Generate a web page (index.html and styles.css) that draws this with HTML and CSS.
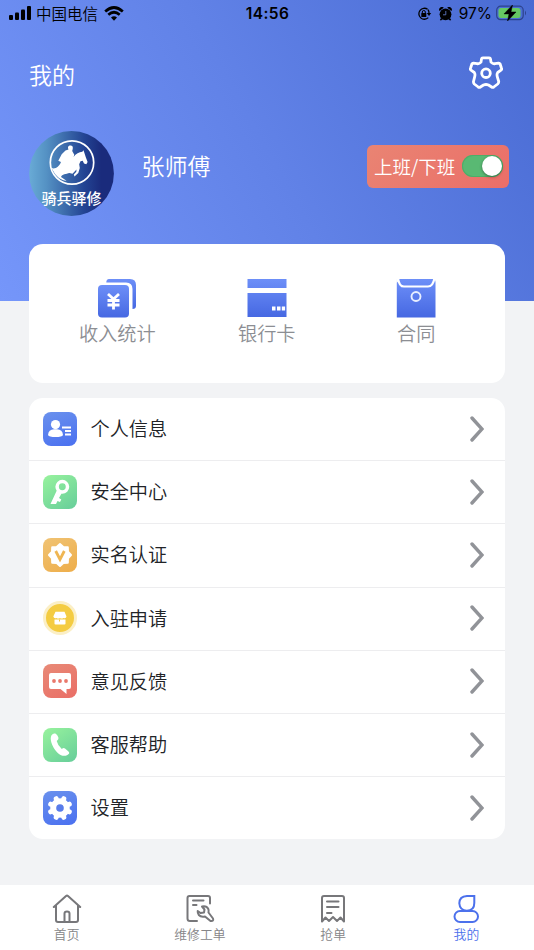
FILE: index.html
```html
<!DOCTYPE html>
<html lang="zh-CN">
<head>
<meta charset="utf-8">
<meta name="viewport" content="width=device-width, initial-scale=1">
<title>我的</title>
<link rel="stylesheet" href="styles.css">
</head>
<body>

<!-- shared gradients -->
<svg class="defs" width="0" height="0">
    <defs>
        <linearGradient id="blue" x1="0" y1="0" x2="0" y2="1"><stop offset="0" stop-color="#6d8ff8"/><stop offset="1" stop-color="#4668e2"/></linearGradient>
        <linearGradient id="navy" x1="0" y1="0" x2="1" y2="0"><stop offset="0" stop-color="#69abd6"/><stop offset="0.2" stop-color="#5592c4"/><stop offset="0.65" stop-color="#234493"/><stop offset="0.85" stop-color="#1a2b7c"/><stop offset="1" stop-color="#1a2b7c"/></linearGradient>
    </defs>
</svg>

<div class="header">
    <div class="status">
        <div class="status-left">
            <svg width="23" height="14" viewBox="0 0 23 14"><rect x="0" y="9" width="4" height="5" rx="1"/><rect x="6" y="6.500" width="4" height="7.500" rx="1"/><rect x="12" y="3.500" width="4" height="10.500" rx="1"/><rect x="18" y="0" width="4" height="14" rx="1"/></svg>
            <span class="carrier">中国电信</span>
            <svg width="20" height="15" viewBox="0 0 20 15"><g fill="none" stroke="#000" stroke-width="2.700"><path d="M1.200 5.400Q10-2.400 18.800 5.400"/><path d="M4.300 8.700Q10 3.800 15.700 8.700"/></g><path d="M7 11.600Q10 8.900 13 11.600L10 14.700Z"/></svg>
        </div>
        <span class="clock">14:56</span>
        <div class="status-right">
            <svg width="15" height="14" viewBox="0 0 15 14"><path d="M10.600 2.300A5.500 5.500 0 1 0 11.300 10.600M11 2.600A5.500 5.500 0 0 1 12 6" fill="none" stroke="#000" stroke-width="1.300"/><path d="M9.800 6H14.200L12 9Z"/><rect x="4.300" y="6" width="5" height="4" rx=".5"/><path d="M5.300 6V5a1.500 1.500 0 0 1 3 0V6" fill="none" stroke="#000"/></svg>
            <svg class="alarm" width="13" height="14" viewBox="0 0 13 14"><circle cx="6.500" cy="7.300" r="5.900"/><path d="M.4 4A2.800 2.800 0 0 1 4.800.7ZM12.600 4A2.800 2.800 0 0 0 8.200.7ZM2 11L.8 13L2 13.500L4 12ZM11 11L12.200 13L11 13.500L9 12Z"/><path d="M6.800 4V7.800H4" fill="none" stroke="#5f76c0" stroke-width=".9"/></svg>
            <span>97%</span>
            <svg class="battery" width="31" height="16" viewBox="0 0 31 16"><rect x=".7" y="1.200" width="26.500" height="13.500" rx="4" fill="none" stroke="#2c438c" stroke-width="1.200"/><rect x="2.500" y="3" width="22" height="10" rx="2.500" fill="#66c963"/><path d="M29 5.500Q31 8 29 10.500Z" fill="#2c438c"/><path d="M16.500 0L8 8.900H13L11.500 16L20 7H15Z" stroke="#000" stroke-width=".5"/></svg>
        </div>
    </div>

    <div class="titlebar">
        <h1>我的</h1>
        <svg width="34" height="34" viewBox="0 0 34 34" fill="none" stroke="#fff" stroke-width="2.800" stroke-linejoin="round"><path d="M13.800 1.800H20.200Q21.300 1.800 21.500 3L22 6.100Q24 8.200 26 7.600L29.500 7.100Q30.600 7 31.100 8L32.500 12.300Q33 13.400 32 14.200L28.700 16.500Q27.500 18.200 28.400 21.200L29.700 25.500Q29.800 27 28.700 28L24.800 31Q23.700 31.800 22.600 31L19.500 29Q17 28 14.500 29L11.400 31Q10.300 31.800 9.200 31L5.300 28Q4.300 27 4.500 25.500L5.600 21.200Q6.500 18.200 5.300 16.500L2 14.200Q1 13.400 1.500 12.300L2.900 8Q3.400 7 4.500 7.100L8 7.600Q10 8.200 12 6.100L12.500 3Q12.700 1.800 13.800 1.800Z"/><circle cx="17" cy="17.200" r="4.300"/></svg>
    </div>

    <div class="profile">
        <svg class="avatar" width="85" height="85" viewBox="0 0 85 85">
            <circle cx="42.500" cy="42.500" r="42.400" fill="url(#navy)"/>
            <circle cx="43" cy="31.500" r="21.700" fill="none" stroke="#fff" stroke-width="1.700"/>
            <path fill="#fff" d="M22.500 37C26 38.500 30 36 32 31L29.300 29.700L32.700 23.200L36.500 19.500L39.500 18.500C38 15.800 40 14 42.500 14.800C44.500 15.500 43.800 18 43.200 20L45.300 23.800L44.500 26C47 22.500 50 21 53.300 20.700L54.500 19.300L55.600 22.400L56.800 26.200L58.600 31L57.300 33.300L55 32.400L53.700 29.800L51.500 30.200L50.200 33.300L50.800 37L49.300 42L45.500 45.400L44.800 43.500L47.300 40.700L47.500 38.400L43.500 42.700L40.500 42C37 43 33 43 32 46L37.500 49.700C33 50 28.500 46 26 43Z"/>
            <text x="42.500" y="72.500" text-anchor="middle">骑兵驿修</text>
        </svg>
        <span class="name">张师傅</span>
        <div class="work">
            <span>上班/下班</span>
            <i class="switch"></i>
        </div>
    </div>
</div>

<div class="card stats">
    <a class="stat">
        <svg width="40" height="40" viewBox="0 0 40 40"><path d="M12 1H33Q39 1 39 7V28Q39 31 35.500 31V11Q35.500 4.500 29 4.500H9.300Q9.300 1 12 1Z" fill="url(#blue)"/><rect x="1" y="7" width="31" height="32.500" rx="4" fill="url(#blue)"/><path d="M11 16L16.500 21L22 16M16.500 21V31.500M10.500 22.500H22.500M10.500 27H22.500" fill="none" stroke="#fff" stroke-width="2.800"/></svg>
        <span>收入统计</span>
    </a>
    <a class="stat">
        <svg width="40" height="40" viewBox="0 0 40 40"><path d="M.5 1H39.500V10H.5ZM.5 15H39.500V39H.5Z" fill="url(#blue)"/><path d="M25 28.500h3.500v4H25zM30 28.500h3.500v4H30zM34.800 28.500h3.300v4h-3.300z" fill="#fff"/></svg>
        <span>银行卡</span>
    </a>
    <a class="stat">
        <svg width="40" height="40" viewBox="0 0 40 40"><path d="M.8 1H39.500V39.500H.8Z" fill="url(#blue)"/><path d="M2 0Q3 8.500 8 8.500H32Q37 8.500 38.500 0" fill="none" stroke="#fff" stroke-width="2.200"/><path d="M0 0H2L2.500 3L.5 5ZM38 0H40V4Z" fill="#fff"/><circle cx="20" cy="18.500" r="4.500" fill="none" stroke="#e7eeff" stroke-width="1.900"/></svg>
        <span>合同</span>
    </a>
</div>

<div class="card list">
    <a class="row">
        <span class="icon blue"><svg viewBox="0 0 34 34"><circle cx="12.500" cy="12.600" r="4.600"/><path d="M5 23Q5.500 17.500 11 17.300H14Q19.500 17.500 20 23Q19 25 12.500 25T5 23Z"/><path class="line" d="M19 15.500H28M22 19H28M22 22.500H28"/></svg></span>
        <span class="label">个人信息</span>
        <svg class="arrow" viewBox="0 0 14 26"><path d="M2 2L12 13L2 24"/></svg>
    </a>
    <a class="row">
        <span class="icon green"><svg viewBox="0 0 34 34"><circle cx="19.300" cy="11.800" r="5.200" fill="none" stroke="#fff" stroke-width="3.500"/><path d="M14 15L18.800 18L16 23L18.300 24.400L17 27L14.500 26L13 29H7.500Z"/></svg></span>
        <span class="label">安全中心</span>
        <svg class="arrow" viewBox="0 0 14 26"><path d="M2 2L12 13L2 24"/></svg>
    </a>
    <a class="row">
        <span class="icon orange"><svg viewBox="0 0 34 34"><path stroke="#fff" stroke-width="2" stroke-linejoin="round" d="M17 6L20.300 9L24.800 9.200L25 13.700L28 17L25 20.300L24.800 24.800L20.300 25L17 28L13.700 25L9.200 24.800L9 20.300L6 17L9 13.700L9.200 9.200L13.700 9Z"/><path d="M12.700 13L17 21.500L21.300 13" fill="none" stroke="#efb653" stroke-width="2.800"/></svg></span>
        <span class="label">实名认证</span>
        <svg class="arrow" viewBox="0 0 14 26"><path d="M2 2L12 13L2 24"/></svg>
    </a>
    <a class="row">
        <span class="icon yellow"><svg viewBox="0 0 34 34"><path d="M12.500 10.800H21.500L23.500 15.500Q23 18 20.500 17Q18.500 18 17 17Q15 18 13.500 17Q11 18 10.300 15.500Z"/><path d="M11.500 18.500H22.500V22.700Q22.500 23.500 21.500 23.500H12.500Q11.500 23.500 11.500 22.700Z"/><path d="M16.500 18.500V20.500" stroke="#f4cc42"/></svg></span>
        <span class="label">入驻申请</span>
        <svg class="arrow" viewBox="0 0 14 26"><path d="M2 2L12 13L2 24"/></svg>
    </a>
    <a class="row">
        <span class="icon red"><svg viewBox="0 0 34 34"><path d="M8 9H26Q28 9 28 11V23Q28 25 26 25H23.500V30L17.500 25H8Q6 25 6 23V11Q6 9 8 9Z"/><g fill="#e9786b"><circle cx="11" cy="17" r="1.900"/><circle cx="17" cy="17" r="1.900"/><circle cx="23" cy="17" r="1.900"/></g></svg></span>
        <span class="label">意见反馈</span>
        <svg class="arrow" viewBox="0 0 14 26"><path d="M2 2L12 13L2 24"/></svg>
    </a>
    <a class="row">
        <span class="icon green"><svg viewBox="0 0 34 34"><path d="M11 5.600C13 4.700 15 8 15.500 10Q15.700 11.600 13.700 13Q14.500 17 18.800 21Q20.500 19.500 22 20.500L25.500 23.500Q27.500 25.500 24 27.200C19 29.500 14 25.500 10.500 19.500C7 13 6.500 7 11 5.600Z"/></svg></span>
        <span class="label">客服帮助</span>
        <svg class="arrow" viewBox="0 0 14 26"><path d="M2 2L12 13L2 24"/></svg>
    </a>
    <a class="row">
        <span class="icon blue"><svg viewBox="0 0 34 34"><circle cx="17" cy="17" r="9.800"/><path stroke="#fff" stroke-width="5" stroke-linecap="round" d="M13.200 7.700L20.800 26.300M20.800 7.700L13.200 26.300M7.700 13.200L26.300 20.800M26.300 13.200L7.700 20.800"/><circle cx="17" cy="17" r="3.800" fill="#587cea"/></svg></span>
        <span class="label">设置</span>
        <svg class="arrow" viewBox="0 0 14 26"><path d="M2 2L12 13L2 24"/></svg>
    </a>
</div>

<div class="tabbar">
    <a>
        <svg viewBox="0 0 30 30"><path d="M1.800 13L14 2Q15 1.200 16 2L28.200 13M4 11.500V26Q4 28 6 28H24Q26 28 26 26V11.500M12.500 27.500V19.500Q12.500 17.500 15 17.500T17.500 19.500V27.500"/></svg>
        <span>首页</span>
    </a>
    <a>
        <svg viewBox="0 0 30 30"><path d="M12 27H5Q2.500 27 2.500 24.500V4Q2.500 2 4.500 2H23Q25 2 25 4V9.500M8 6.500H18.500M8 11H11.500"/><path d="M17 12.500Q21.500 11.500 23.200 14.800Q24 16.500 23.500 18.500L28 24.500Q29 27.500 25.500 27L20 22.500Q16 23.500 13.800 21Q12.500 19 12.700 17L15.500 19L19 18.500L19.500 15.500Z"/></svg>
        <span>维修工单</span>
    </a>
    <a>
        <svg viewBox="0 0 30 30"><path d="M4 27.500V4Q4 2 6 2H24Q26 2 26 4V27.500L22.500 23.500L19 27L15 23L11 27L7.500 23.500ZM9 7.500H20.500M9 13H20.500M9 19H13.500"/></svg>
        <span>抢单</span>
    </a>
    <a class="active">
        <svg viewBox="0 0 30 30"><path d="M23.300 2H16Q8.300 2.500 8.300 9.300Q8.800 16.500 15.800 16.800Q23.300 16.500 23.300 9Z"/><rect x="3.500" y="17" width="23.500" height="11" rx="5.500"/></svg>
        <span>我的</span>
    </a>
</div>

</body>
</html>
```
FILE: styles.css
```css
* {
    box-sizing: border-box;
}

body {
    margin: 0;
    height: 950px;
    display: flex;
    flex-direction: column;
    overflow: hidden;
    background: #f2f3f5;
    font-family: "Noto Sans CJK SC", sans-serif;
    font-weight: 350;
}

svg {
    display: block;
    flex: none;
}

.defs {
    position: absolute;
}

/* Blue header */
.header {
    flex: none;
    height: 301px;
    color: #fff;
    background: linear-gradient(61deg, #7596fa 0%, #6182e7 50%, #496bd3 100%);
}

.status {
    display: grid;
    grid-template-columns: 1fr auto 1fr;
    align-items: center;
    height: 28px;
    padding: 0 8px 0 9px;
    color: #000;
    font-size: 15.500px;
    font-weight: 400;
    line-height: 28px;
}

.status-left,
.status-right {
    display: flex;
    align-items: center;
}

.status-left svg {
    margin-top: -2px;
}

.carrier {
    margin: -2px 6px 0 4px;
    font-weight: 350;
}

.clock {
    font-family: Inter, sans-serif;
    font-weight: 600;
    letter-spacing: 0.4px;
}

.status-right {
    justify-content: flex-end;
    font-family: Inter, sans-serif;
}

.alarm {
    margin: 0 7px 0 7px;
}

.battery {
    margin: -2px -1px 0 4px;
}

.titlebar {
    display: flex;
    justify-content: space-between;
    align-items: center;
    height: 92px;
    padding: 0 31px 0 29px;
}

.titlebar svg {
    margin-bottom: 2px;
}

h1 {
    margin: 0;
    font-size: 23px;
    font-weight: 350;
}

.profile {
    display: flex;
    align-items: flex-start;
    padding: 10.500px 25px 0 28.500px;
}

.avatar text {
    fill: #fff;
    font-size: 15px;
    font-weight: 500;
}

.name {
    margin: 17px auto 0 28px;
    font-size: 23px;
    line-height: 34px;
}

.work {
    display: flex;
    align-items: center;
    justify-content: space-between;
    width: 142px;
    height: 43px;
    margin-top: 14px;
    padding: 0 6px 0 7px;
    border-radius: 6px;
    background: linear-gradient(135deg, #e98473, #eb6e68);
    font-size: 18.500px;
    white-space: nowrap;
}

.work span {
    margin-top: -1px;
}

.switch {
    width: 41px;
    height: 22px;
    padding: 1px;
    border-radius: 11px;
    background: #59b973;
    box-shadow: inset 0 0 0 1px #4ead68;
}

.switch::after {
    content: "";
    display: block;
    width: 20px;
    height: 20px;
    margin-left: auto;
    border-radius: 50%;
    background: #fff;
    box-shadow: 0 1px 3px rgba(0, 0, 0, 0.4);
}

/* White cards */
.card {
    flex: none;
    margin: 0 29px 0 28.500px;
    border-radius: 14px;
    background: #fff;
}

.stats {
    display: grid;
    grid-template-columns: repeat(3, 149.500px);
    justify-content: center;
    height: 139px;
    margin-top: -57px;
    padding-top: 34px;
    z-index: 1;
}

.stat {
    display: flex;
    flex-direction: column;
    align-items: center;
    color: #8c8e93;
    font-size: 19.200px;
    line-height: 31px;
}

.list {
    margin-top: 15px;
    overflow: hidden;
}

.row {
    display: flex;
    align-items: center;
    height: 63.200px;
    padding: 0 21px 1px 14px;
    border-bottom: 1px solid #ededef;
}

.row:last-child {
    height: 62px;
    border-bottom: 0;
}

.icon {
    width: 34px;
    height: 34px;
    border-radius: 8px;
    fill: #fff;
}

.icon .line {
    stroke: #fff;
    stroke-width: 1.800;
}

.blue {
    background: linear-gradient(160deg, #6a91ed, #4a70f0);
}

.green {
    background: linear-gradient(145deg, #98f39d, #66cd9a);
}

.orange {
    background: linear-gradient(150deg, #f0c374, #eead49);
}

.red {
    background: linear-gradient(150deg, #e88a77, #ea6e66);
}

.yellow {
    border: 3.500px solid #fbefc6;
    border-radius: 50%;
    background: #f4cc42;
}

.yellow svg {
    width: 34px;
    margin: -3px;
}

.label {
    flex: 1;
    margin: -1px 0 0 14px;
    color: #212327;
    font-size: 19.200px;
}

.arrow {
    width: 14px;
    height: 26px;
    fill: none;
    stroke: #919398;
    stroke-width: 3.400;
    stroke-linecap: round;
}

/* Bottom navigation */
.tabbar {
    flex: none;
    display: flex;
    height: 65px;
    margin-top: auto;
    padding: 9px 1px 0 0;
    background: #fff;
}

.tabbar a {
    flex: 1;
    display: flex;
    flex-direction: column;
    align-items: center;
    color: #858587;
    font-size: 12.800px;
    font-weight: 350;
    line-height: 20px;
}

.tabbar svg {
    width: 30px;
    height: 30px;
    fill: none;
    stroke: #77777a;
    stroke-width: 2;
    stroke-linejoin: round;
    stroke-linecap: round;
}

.tabbar .active {
    color: #4c71ec;
}

.tabbar .active svg {
    stroke: #4c71ec;
    stroke-linejoin: miter;
}
```
